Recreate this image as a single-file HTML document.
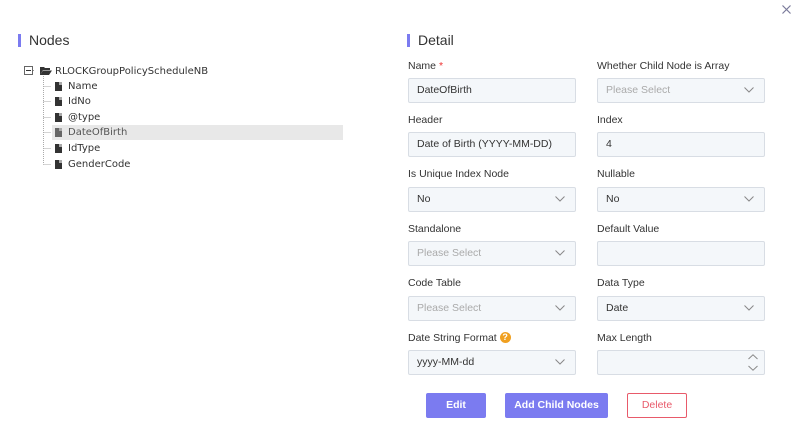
<!DOCTYPE html>
<html><head><style>
*{margin:0;padding:0;box-sizing:border-box;font-family:"Liberation Sans",Arial,sans-serif}
body{width:797px;height:437px;background:#fff;position:relative;overflow:hidden;color:#333}
.a{position:absolute}
.h{font-size:14px;color:#333}
.bar{position:absolute;width:3px;height:13px;background:#7b7bf0}
.lbl{position:absolute;font-size:10.5px;color:#333}
.inp{position:absolute;width:168px;height:25px;background:#f4f7fa;border:1px solid #d8dde4;border-radius:2px;font-size:10.5px;padding-left:8px;line-height:23px;color:#333;white-space:nowrap}
.ph{color:#aaa}
.chev{position:absolute;right:10px;top:8px}
.tr{position:absolute;font-family:"DejaVu Sans",Verdana,sans-serif;font-size:10px;color:#333}
.file{position:absolute;width:7px;height:9px;background:#333}
.file:after{content:"";position:absolute;right:0;top:0;border-left:3px solid #aaa;border-bottom:3px solid #aaa;border-top:0;border-right:0}
.btn{position:absolute;height:25px;top:393px;font-size:10.5px;text-align:center;line-height:25px;border-radius:2px;font-weight:bold}
</style></head><body>
<svg class="a" style="left:782px;top:5px" width="9" height="9"><path d="M0.5 0.5L8.5 8.5M8.5 0.5L0.5 8.5" stroke="#7a7a9a" stroke-width="1.2"/></svg>
<div class="bar" style="left:18px;top:34px"></div><div class="a h" style="left:29px;top:32px">Nodes</div>
<div class="bar" style="left:407px;top:34px"></div><div class="a h" style="left:418px;top:32px">Detail</div>

<svg class="a" style="left:24px;top:66px" width="30" height="104">
<rect x="0.5" y="0.5" width="8" height="8" fill="#fff" stroke="#666"/><path d="M2 4.5H7" stroke="#333"/>
<path d="M9 4.5H11" stroke="#999" stroke-dasharray="1 1"/>
<path d="M19.5 10V98.5M19.5 20.5H27M19.5 35.5H27M19.5 51.5H27M19.5 66.5H27M19.5 82.5H27M19.5 98.5H27" stroke="#aaa" stroke-dasharray="1 1"/>
</svg>
<svg class="a" style="left:40px;top:67px" width="12" height="8"><path d="M0 0H4L5 1H10V3H3L0 8Z M3 3.5H12L9 8H0Z" fill="#333"/></svg>
<div class="tr" style="left:55px;top:66px">RLOCKGroupPolicyScheduleNB</div>
<div class="a" style="left:52px;top:125px;width:291px;height:15px;background:#e8e8e8"></div>
<div class="file" style="left:55px;top:82px"></div><div class="tr" style="left:68px;top:81px">Name</div>
<div class="file" style="left:55px;top:97px"></div><div class="tr" style="left:68px;top:96px">IdNo</div>
<div class="file" style="left:55px;top:113px"></div><div class="tr" style="left:68px;top:112px">@type</div>
<div class="file" style="left:55px;top:128px;background:#666"></div><div class="tr" style="left:68px;top:127px;color:#555">DateOfBirth</div>
<div class="file" style="left:55px;top:144px"></div><div class="tr" style="left:68px;top:143px">IdType</div>
<div class="file" style="left:55px;top:160px"></div><div class="tr" style="left:68px;top:159px">GenderCode</div>

<div class="lbl" style="left:408px;top:60px">Name <span style="color:#e33">*</span></div>
<div class="inp" style="left:408px;top:78px">DateOfBirth</div>
<div class="lbl" style="left:597px;top:60px">Whether Child Node is Array</div>
<div class="inp ph" style="left:597px;top:78px">Please Select<svg class="chev" width="10" height="6"><path d="M0.5 0.5L5 5L9.5 0.5" fill="none" stroke="#888"/></svg></div>

<div class="lbl" style="left:408px;top:114px">Header</div>
<div class="inp" style="left:408px;top:132px">Date of Birth (YYYY-MM-DD)</div>
<div class="lbl" style="left:597px;top:114px">Index</div>
<div class="inp" style="left:597px;top:132px">4</div>

<div class="lbl" style="left:408px;top:168px">Is Unique Index Node</div>
<div class="inp" style="left:408px;top:187px">No<svg class="chev" width="10" height="6"><path d="M0.5 0.5L5 5L9.5 0.5" fill="none" stroke="#888"/></svg></div>
<div class="lbl" style="left:597px;top:168px">Nullable</div>
<div class="inp" style="left:597px;top:187px">No<svg class="chev" width="10" height="6"><path d="M0.5 0.5L5 5L9.5 0.5" fill="none" stroke="#888"/></svg></div>

<div class="lbl" style="left:408px;top:223px">Standalone</div>
<div class="inp ph" style="left:408px;top:241px">Please Select<svg class="chev" width="10" height="6"><path d="M0.5 0.5L5 5L9.5 0.5" fill="none" stroke="#888"/></svg></div>
<div class="lbl" style="left:597px;top:223px">Default Value</div>
<div class="inp" style="left:597px;top:241px"></div>

<div class="lbl" style="left:408px;top:277px">Code Table</div>
<div class="inp ph" style="left:408px;top:296px">Please Select<svg class="chev" width="10" height="6"><path d="M0.5 0.5L5 5L9.5 0.5" fill="none" stroke="#888"/></svg></div>
<div class="lbl" style="left:597px;top:277px">Data Type</div>
<div class="inp" style="left:597px;top:296px">Date<svg class="chev" width="10" height="6"><path d="M0.5 0.5L5 5L9.5 0.5" fill="none" stroke="#888"/></svg></div>

<div class="lbl" style="left:408px;top:332px">Date String Format <span style="display:inline-block;width:11px;height:11px;border-radius:50%;background:#f0a020;color:#fff;font-size:9px;line-height:11px;text-align:center;font-weight:bold;vertical-align:1px">?</span></div>
<div class="inp" style="left:408px;top:350px">yyyy-MM-dd<svg class="chev" width="10" height="6"><path d="M0.5 0.5L5 5L9.5 0.5" fill="none" stroke="#888"/></svg></div>
<div class="lbl" style="left:597px;top:332px">Max Length</div>
<div class="inp" style="left:597px;top:350px"><svg class="a" style="right:6px;top:3px" width="10" height="18"><path d="M0.5 5L5 0.8L9.5 5M0.5 12L5 16.2L9.5 12" fill="none" stroke="#888"/></svg></div>

<div class="btn" style="left:426px;width:60px;background:#7b7bf0;color:#fff">Edit</div>
<div class="btn" style="left:505px;width:103px;background:#7b7bf0;color:#fff">Add Child Nodes</div>
<div class="btn" style="left:627px;width:60px;border:1px solid #e85a6a;color:#e85a6a;font-weight:normal;line-height:23px">Delete</div>
</body></html>
